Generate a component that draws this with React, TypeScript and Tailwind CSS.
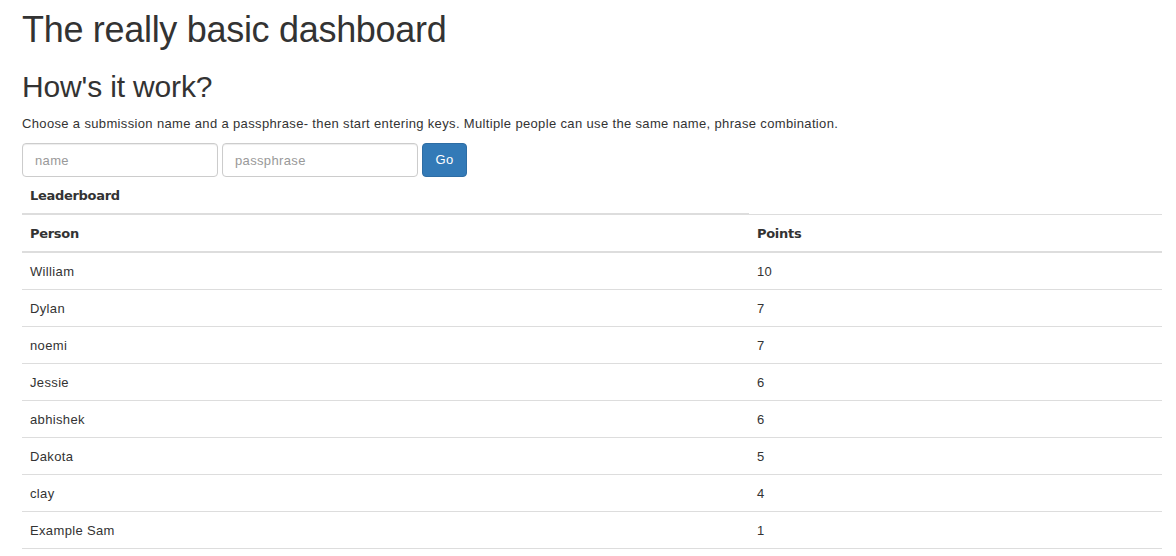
const people = [
  { name: 'William', points: 10 },
  { name: 'Dylan', points: 7 },
  { name: 'noemi', points: 7 },
  { name: 'Jessie', points: 6 },
  { name: 'abhishek', points: 6 },
  { name: 'Dakota', points: 5 },
  { name: 'clay', points: 4 },
  { name: 'Example Sam', points: 1 },
];

export default function App() {
  return (
    <div className="min-h-screen bg-white px-[22px] text-[#333] font-['Liberation_Sans',Arial,sans-serif]">
      <h1 className="mt-[10px] mb-[10px] text-[36px] leading-[1.1] font-normal tracking-[-0.3px]">The really basic dashboard</h1>
      <h2 className="mt-[20px] mb-[12px] text-[30px] leading-[1.1] font-normal tracking-[-0.15px]">How's it work?</h2>
      <p className="mb-[10px] text-[13px] leading-[1.42857] tracking-[0.35px]">
        Choose a submission name and a passphrase- then start entering keys. Multiple people can use the same name, phrase combination.
      </p>

      <form className="flex gap-[4px]" onSubmit={(e) => e.preventDefault()}>
        <input
          type="text"
          placeholder="name"
          className="h-[34px] w-[196px] rounded-[4px] border border-[#ccc] px-[12px] text-[13px] tracking-[0.35px] text-[#555] placeholder:text-[#999] shadow-[inset_0_1px_1px_rgba(0,0,0,0.075)] outline-none"
        />
        <input
          type="password"
          placeholder="passphrase"
          className="h-[34px] w-[196px] rounded-[4px] border border-[#ccc] px-[12px] text-[13px] tracking-[0.35px] text-[#555] placeholder:text-[#999] shadow-[inset_0_1px_1px_rgba(0,0,0,0.075)] outline-none"
        />
        <button
          type="submit"
          className="h-[34px] w-[45px] rounded-[4px] border border-[#2e6da4] bg-[#337ab7] text-[13px] tracking-[0.35px] text-white"
        >
          Go
        </button>
      </form>

      <table className="w-[1140px] border-collapse text-[13px] leading-[20px] tracking-[0.35px]">
        <thead>
          <tr>
            <th className="w-[727px] border-b-2 border-[#ddd] px-[8px] pt-[9px] pb-[7px] text-left font-bold tracking-[-0.3px] font-['DejaVu_Sans',sans-serif]">
              Leaderboard
            </th>
          </tr>
          <tr>
            <th className="border-t border-b-2 border-[#ddd] px-[8px] pt-[9px] pb-[7px] text-left font-bold tracking-[-0.3px] font-['DejaVu_Sans',sans-serif]">
              Person
            </th>
            <th className="border-t border-b-2 border-[#ddd] px-[8px] pt-[9px] pb-[7px] text-left font-bold tracking-[-0.3px] font-['DejaVu_Sans',sans-serif]">
              Points
            </th>
          </tr>
        </thead>
        <tbody>
          {people.map((p) => (
            <tr key={p.name}>
              <td className="border-t border-b border-[#ddd] px-[8px] pt-[9px] pb-[7px]">{p.name}</td>
              <td className="border-t border-b border-[#ddd] px-[8px] pt-[9px] pb-[7px]">{p.points}</td>
            </tr>
          ))}
        </tbody>
      </table>
    </div>
  );
}
